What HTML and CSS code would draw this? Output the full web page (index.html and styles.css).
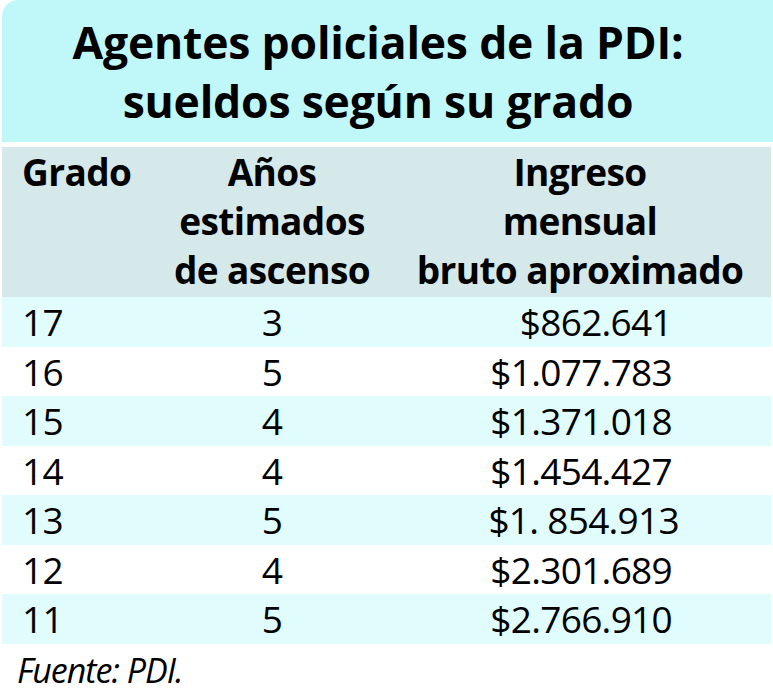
FILE: index.html
```html
<!DOCTYPE html>
<html lang="es">
<head>
<meta charset="utf-8">
<title>Agentes policiales de la PDI: sueldos según su grado</title>
<link rel="stylesheet" href="styles.css">
</head>
<body>
<div class="chart">
  <div class="title">
    <h1>Agentes policiales de la PDI:<br>sueldos según su grado</h1>
  </div>
  <div class="table">
    <div class="row head">
      <div class="c1">Grado</div>
      <div class="c2">Años<br>estimados<br>de ascenso</div>
      <div class="c3">Ingreso<br>mensual<br>bruto aproximado</div>
    </div>
    <div class="row odd"><div class="c1">17</div><div class="c2">3</div><div class="c3">$862.641</div></div>
    <div class="row"><div class="c1">16</div><div class="c2">5</div><div class="c3">$1.077.783</div></div>
    <div class="row odd"><div class="c1">15</div><div class="c2">4</div><div class="c3">$1.371.018</div></div>
    <div class="row"><div class="c1">14</div><div class="c2">4</div><div class="c3">$1.454.427</div></div>
    <div class="row odd"><div class="c1">13</div><div class="c2">5</div><div class="c3 shift">$1. 854.913</div></div>
    <div class="row"><div class="c1">12</div><div class="c2">4</div><div class="c3">$2.301.689</div></div>
    <div class="row odd"><div class="c1">11</div><div class="c2">5</div><div class="c3">$2.766.910</div></div>
  </div>
  <p class="source">Fuente: PDI.</p>
</div>
</body>
</html>
```
FILE: styles.css
```css
html, body {
  margin: 0;
  padding: 0;
  background: #ffffff;
}
body {
  font-family: "Open Sans", "Noto Sans", sans-serif;
  color: #000;
}
.chart {
  width: 773px;
  height: 695px;
  overflow: hidden;
}
.title {
  margin-left: 2px;
  background: #c0f8fa;
  border-top-left-radius: 16px;
  padding: 12px 19px 12px 0;
  height: 118px;
}
.title h1 {
  margin: 0;
  font-size: 44.5px;
  line-height: 59px;
  font-weight: 700;
  text-align: center;
  letter-spacing: -0.2px;
  white-space: nowrap;
}
.table {
  margin: 5px 2px 0 2px;
}
.row {
  display: grid;
  grid-template-columns: 168px 204px 1fr;
  height: 49.5px;
  font-size: 37px;
  line-height: 49.5px;
  letter-spacing: -0.7px;
}
.row.odd {
  background: #e0fcfd;
}
.row.head {
  height: auto;
  background: #d5e9eb;
  font-weight: 700;
  font-size: 37px;
  line-height: 49px;
  letter-spacing: -0.6px;
  padding-bottom: 3px;
}
.c1 {
  padding-left: 20px;
}
.c2 {
  text-align: center;
}
.c3 {
  text-align: right;
  padding-right: 99px;
}
.head .c3 {
  text-align: center;
  padding-right: 0;
  padding-left: 15px;
  white-space: nowrap;
}
.c3.shift {
  padding-right: 92px;
}
.source {
  margin: 6px 0 0 17px;
  font-style: italic;
  font-size: 34px;
  line-height: 40px;
  letter-spacing: -1px;
}
```
